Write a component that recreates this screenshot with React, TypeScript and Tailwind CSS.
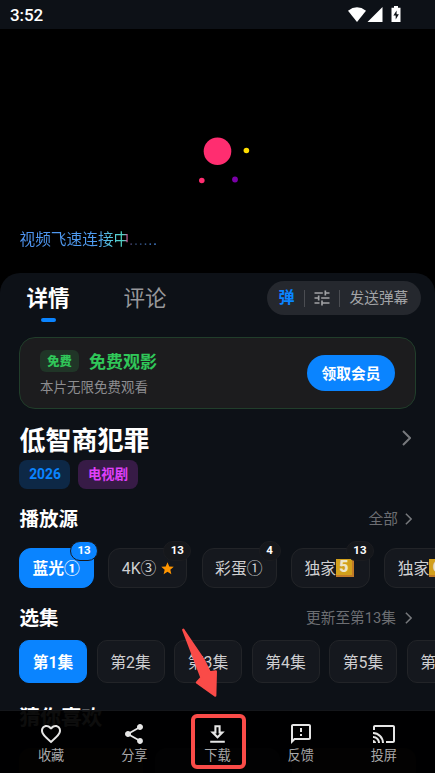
import { ReactNode } from 'react';
import {
  MdCast,
  MdFavoriteBorder,
  MdOutlineDownload,
  MdOutlineFeedback,
  MdShare,
  MdStar,
  MdTune,
} from 'react-icons/md';

interface Source {
  name: string;
  count?: number;
  starred?: boolean;
  keycap?: string;
  width: string;
}

const sources: Source[] = [
  { name: '蓝光①', count: 13, width: 'w-[75px]' },
  { name: '4K③', count: 13, starred: true, width: 'w-[79px]' },
  { name: '彩蛋①', count: 4, width: 'w-[75px]' },
  { name: '独家', count: 13, keycap: '5', width: 'w-[79px]' },
  { name: '独家', keycap: '6', width: 'w-[79px]' },
];

const episodes = [1, 2, 3, 4, 5, 6];

const Chevron = ({ className }: { className: string }) => (
  <svg viewBox="0 0 9 16" fill="none" stroke="currentColor" strokeWidth="2" className={className}>
    <path d="M1 1l7 7-7 7" />
  </svg>
);

const StatusBar = () => (
  <div className="flex h-[29px] shrink-0 items-center bg-[#0d1117] pr-[34px] pl-[10px]">
    <span className="grow pt-[1px] text-[17px] leading-none font-medium tracking-[-0.1px]">3:52</span>
    <svg width="53" height="17" viewBox="0 0 53 17" fill="#fff">
      <path d="M0 4.7Q9 -2.2 18 4.7L9 16Z" />
      <path d="M19.5 16L34.5 1v15Z" />
      <path d="M43.5 1.7H46V0h4v1.7h2.5V16h-9Z" />
      <path d="M48.6 4.5l-3.2 5h2.3v4l3.2-5.2h-2.3Z" fill="#0d1117" />
    </svg>
  </div>
);

const Player = () => (
  <div className="flex h-[264px] shrink-0 flex-col bg-black">
    <svg width="435" height="199" viewBox="0 29 435 199">
      <circle cx="217.5" cy="151.3" r="13.8" fill="#ff2d70" />
      <circle cx="246.4" cy="150.5" r="2.8" fill="#ffde00" />
      <circle cx="201.8" cy="180.5" r="2.8" fill="#ff2d70" />
      <circle cx="235" cy="179.5" r="2.9" fill="#7b00a8" />
    </svg>
    <p className="ml-[19.5px] w-fit bg-[linear-gradient(90deg,#4f95f2_0%,#4f9df0_56%,#56c5dc_66%,#52d6c6_74%,#6fb8bc_76%,#dc4f93_78%,#2f4266_81%,#30507f_90%,#4f95f2_100%)] bg-clip-text text-[15.7px] leading-[23px] text-transparent">
      视频飞速连接中<span className="tracking-[0.6px]">......</span>
    </p>
  </div>
);

const Tabs = () => (
  <div className="flex h-[56px] shrink-0 items-start pr-[14.5px] pl-[26.5px]">
    <div className="flex w-[43px] flex-col items-center pt-[9px]">
      <span className="text-[21.5px] leading-[33px] font-bold whitespace-nowrap">详情</span>
      <span className="mt-[3px] h-[4px] w-[15px] rounded-full bg-[#0a84ff]" />
    </div>
    <span className="ml-[54px] grow pt-[9px] text-[21.5px] leading-[33px] text-[#98989b]">评论</span>
    <div className="mt-[8px] flex h-[34px] w-[154px] items-center rounded-full bg-[#25282e] pl-[12px] text-[#a2a3a6]">
      <span className="w-[16px] text-[16px] leading-none font-bold text-[#0a84ff]">弹</span>
      <span className="ml-[9px] h-[17px] w-px bg-[#4b4d52]" />
      <MdTune className="ml-[7px] size-[20px]" />
      <span className="ml-[7px] h-[17px] w-px bg-[#4b4d52]" />
      <span className="ml-[10px] text-[14.7px] leading-none whitespace-nowrap">发送弹幕</span>
    </div>
  </div>
);

const FreeCard = () => (
  <div className="mx-[19px] mt-[8px] flex h-[72px] shrink-0 items-center rounded-[16px] border border-[#213e2b] bg-[#1c1c1e] pr-[20px] pl-[20px]">
    <div className="grow">
      <div className="flex h-[22px] items-center">
        <span className="flex h-[22px] w-[39px] items-center justify-center rounded-[6px] bg-[#203527] pt-[3px] text-[12.3px] leading-none font-black text-[#30c759]">
          免费
        </span>
        <span className="ml-[10px] pt-[3px] text-[17px] leading-none font-semibold text-[#30c759]">免费观影</span>
      </div>
      <p className="mt-[5px] text-[13.5px] leading-[20px] text-[#8d8d90]">本片无限免费观看</p>
    </div>
    <button className="h-[36px] w-[88px] rounded-full bg-[#0a84ff] pt-[2px] text-[14.7px] leading-none font-semibold">
      领取会员
    </button>
  </div>
);

interface SectionHeadProps {
  title: string;
  more: string;
  chevronGap: string;
}

const SectionHead = ({ title, more, chevronGap }: SectionHeadProps) => (
  <div className="flex h-[30px] shrink-0 items-center pr-[23px] pl-[19.5px]">
    <h2 className="grow pt-[2px] text-[19.5px] leading-none font-bold">{title}</h2>
    <span className="text-[14.7px] leading-none text-[#6c6e72]">{more}</span>
    <Chevron className={`h-[12px] w-[7px] text-[#77797d] ${chevronGap}`} />
  </div>
);

const SourceList = () => (
  <div className="mt-[14px] flex h-[40px] shrink-0 gap-[14.3px] overflow-visible pl-[19px]">
    {sources.map((source, i) => (
      <div
        key={i}
        className={`relative flex shrink-0 items-center rounded-[12px] border pl-[12.5px] text-[15.8px] leading-none whitespace-nowrap ${source.width} ${
          i === 0 ? 'border-[#0a84ff] bg-[#0a84ff] font-semibold' : 'border-[#222428] bg-[#15181e] text-[#cfcfd1]'
        }`}
      >
        <span className="pt-[1px]">{source.name}</span>
        {source.starred && <MdStar className="ml-[4px] size-[15px] text-[#ff9500]" />}
        {source.keycap && (
          <span className="flex h-[18px] w-[18px] shrink-0 items-center justify-center border-r-2 border-b-2 border-[#c17a27] bg-[#d2a01c] text-[16px] leading-none font-black text-[#eee5c8]">
            {source.keycap}
          </span>
        )}
        {source.count && (
          <span
            className={`absolute top-[-8px] right-[-5px] flex h-[20px] items-center justify-center rounded-full text-[11.5px] leading-none font-bold text-white ${
              i === 0 ? 'border-[1.5px] border-[#17191d] bg-[#0a84ff]' : 'border border-[#1b1c20] bg-[#15171b]'
            } ${source.count > 9 ? 'w-[28px]' : 'w-[22px]'}`}
          >
            {source.count}
          </span>
        )}
      </div>
    ))}
  </div>
);

const EpisodeList = () => (
  <div className="mt-[7px] flex h-[43px] shrink-0 gap-[9.5px] pl-[19px]">
    {episodes.map((n) => (
      <div
        key={n}
        className={`flex w-[68px] shrink-0 items-center justify-center rounded-[10px] border pt-[2px] text-[15.8px] leading-none ${
          n === 1 ? 'border-[#0a84ff] bg-[#0a84ff] font-semibold' : 'border-[#222428] bg-[#15181e] text-[#cfcfd1]'
        }`}
      >
        第{n}集
      </div>
    ))}
  </div>
);

const NavItem = ({ icon, label }: { icon: ReactNode; label: string }) => (
  <div className="flex w-[83.2px] flex-col items-center pt-[11px]">
    <span className="flex h-[24px] items-center">{icon}</span>
    <span className="text-[13.2px] leading-[19px] text-[#a9a9aa]">{label}</span>
  </div>
);

const BottomNav = () => (
  <nav className="absolute inset-x-0 bottom-0 flex h-[63px] justify-center border-t border-[#14161a] bg-black/95 text-[#e6e6e6]">
    <NavItem icon={<MdFavoriteBorder className="size-[24px]" />} label="收藏" />
    <NavItem icon={<MdShare className="size-[24px]" />} label="分享" />
    <NavItem icon={<MdOutlineDownload className="size-[25px]" />} label="下载" />
    <NavItem icon={<MdOutlineFeedback className="size-[24px]" />} label="反馈" />
    <NavItem icon={<MdCast className="size-[24px]" />} label="投屏" />
  </nav>
);

const App = () => {
  return (
    <div className="relative flex h-[773px] w-[435px] flex-col overflow-hidden bg-black font-[Roboto,'Noto_Sans_CJK_SC',sans-serif] text-white">
      <StatusBar />
      <Player />
      <main className="-mt-[20px] flex h-[500px] shrink-0 flex-col overflow-hidden rounded-t-[20px] bg-[#0d1117]">
        <Tabs />
        <FreeCard />
        <div className="mt-[13px] flex h-[38px] shrink-0 items-center pr-[24.5px] pl-[19.5px]">
          <h1 className="grow text-[26px] leading-none font-bold">低智商犯罪</h1>
          <Chevron className="-mt-[7px] h-[16px] w-[9px] text-[#77797d]" />
        </div>
        <div className="flex h-[29px] shrink-0 gap-[8px] pl-[19px] text-[13.3px] leading-none font-bold">
          <span className="flex w-[51px] items-center justify-center rounded-[8px] bg-[#0d2846] pl-[1px] text-[13.8px] text-[#0a84ff]">
            2026
          </span>
          <span className="flex w-[60px] items-center justify-center rounded-[8px] bg-[#371b46] text-[#e040fb]">
            电视剧
          </span>
        </div>
        <div className="h-[15px] shrink-0" />
        <SectionHead title="播放源" more="全部" chevronGap="ml-[7px]" />
        <SourceList />
        <div className="h-[15px] shrink-0" />
        <SectionHead title="选集" more="更新至第13集" chevronGap="ml-[9px]" />
        <EpisodeList />
        <h2 className="mt-[20px] pl-[19.5px] text-[20.7px] leading-[30px] font-bold">猜你喜欢</h2>
        <div className="mt-[15px] flex h-[160px] shrink-0 gap-[12px] px-[19px]">
          <div className="grow rounded-[12px] bg-[#3a3320]" />
          <div className="grow rounded-[12px] bg-[#33343a]" />
          <div className="grow rounded-[12px] bg-[#3a3025]" />
        </div>
      </main>
      <BottomNav />
      <svg viewBox="170 620 90 153" className="pointer-events-none absolute top-[620px] left-[170px] h-[153px] w-[90px]">
        <path
          d="M183.3 629.8L204 660.5L209.8 672.5L215.8 671.5L215.2 695.5L197 682.5L201.5 677.5Z"
          fill="#fa4b48"
          stroke="#fa4b48"
          strokeWidth="2.4"
          strokeLinejoin="round"
        />
        <rect x="193" y="716" width="51" height="51" rx="4" fill="none" stroke="#fa4b48" strokeWidth="4" />
      </svg>
    </div>
  );
};

export default App;
